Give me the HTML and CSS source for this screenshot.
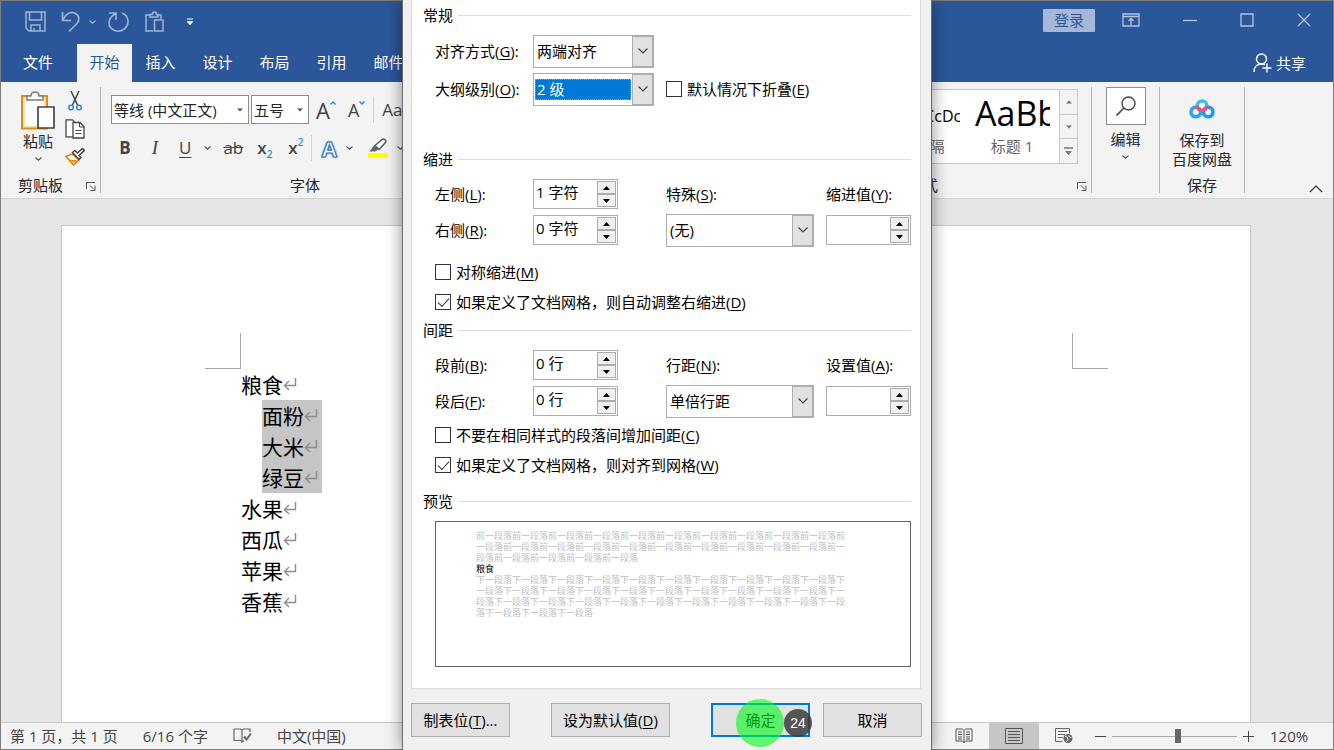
FILE: index.html
```html
<!DOCTYPE html>
<html lang="zh-CN">
<head>
<meta charset="utf-8">
<title>文档</title>
<link rel="stylesheet" href="styles.css">
</head>
<body>
<svg class="defs" aria-hidden="true">
  <symbol id="return" viewBox="0 0 14 14"><path d="M12.500 1v7.500H2M6 4 1.500 8.500 6 13" fill="none" stroke="#8c8c8c" stroke-width="1.400"/></symbol>
  <symbol id="chev" viewBox="0 0 10 6"><path d="M.5.5 5 5 9.500.5" fill="none" stroke="#444" stroke-width="1.200"/></symbol>
  <symbol id="minichev" viewBox="0 0 7 4"><path d="M.5.5 3.500 3.200 6.500.5" fill="none" stroke="currentColor" stroke-width="1.100"/></symbol>
  <symbol id="tri" viewBox="0 0 7 4"><path d="M0 0h7L3.500 4z" fill="currentColor"/></symbol>
  <symbol id="triup" viewBox="0 0 7 4"><path d="M0 4h7L3.500 0z" fill="currentColor"/></symbol>
  <symbol id="launch" viewBox="0 0 10 9"><path d="M.5 7V.5H9M4 3.500 8 7.500M9 3.500V8.500H4.500" fill="none" stroke="#555"/></symbol>
</svg>
<div class="window">
  <header class="titlebar">
    <div class="toprow">
      <div class="quick">
        <button class="ib" aria-label="保存"><svg width="22" height="22" viewBox="0 0 22 22"><g fill="none" stroke="currentColor" stroke-width="1.500"><path d="M1 1h19v19H4L1 17z"/><path d="M4.500 1v8h12V1M6 20v-6h9v6M9 20v-3"/></g></svg></button>
        <button class="ib undo" aria-label="撤消"><svg width="20" height="22" viewBox="0 0 20 22"><path d="M1.500 1v8.500H10M1.500 9.500C5 2 10 .8 13.500 2c5 2 5.500 7 2.500 10.500L8 20.500" fill="none" stroke="currentColor" stroke-width="1.700"/></svg></button>
        <button class="ib" aria-label="撤消选项"><svg width="7" height="4"><use href="#minichev"/></svg></button>
        <button class="ib redo" aria-label="重复"><svg width="22" height="22" viewBox="0 0 22 22"><path d="M1 2h7v7M8 2.500C-1 7-1 16 6.500 19.500c8 3 14-4 13.500-9.500C19.800 6 17.500 3.500 14 2" fill="none" stroke="currentColor" stroke-width="1.600"/></svg></button>
        <button class="ib paste" aria-label="粘贴"><svg width="20" height="22" viewBox="0 0 20 22"><g fill="none" stroke="currentColor" stroke-width="1.500"><path d="M8 20H1V4h4M12 4h4v4"/><path d="M5 6V3.500h2.500C7.500.3 11.500.3 11.500 3.500H13V6zM9.500 9h8.500v11H9.500z"/></g></svg></button>
        <button class="ib more" aria-label="自定义快速访问工具栏"><svg width="6" height="8" viewBox="0 0 6 8"><path d="M0 1h6" stroke="#fff"/><path d="M0 3.500h6L3 7z" fill="#fff" stroke="#fff" stroke-width=".5"/></svg></button>
      </div>
      <div class="winctl">
        <button class="login">登录</button>
        <button class="ib" aria-label="功能区显示选项"><svg width="18" height="14" viewBox="0 0 18 14"><path d="M1 1h16v12H1zM1 3.500h16M9 12V6M6.500 8 9 5.500 11.500 8" fill="none" stroke="currentColor" stroke-width="1.300"/></svg></button>
        <button class="ib" aria-label="最小化"><svg width="14" height="14"><path d="M0 7.500h14" stroke="currentColor" stroke-width="1.300"/></svg></button>
        <button class="ib" aria-label="最大化"><svg width="14" height="14"><path d="M1 1h12v12H1z" fill="none" stroke="currentColor" stroke-width="1.300"/></svg></button>
        <button class="ib" aria-label="关闭"><svg width="14" height="14"><path d="m1 1 12 12M13 1 1 13" stroke="currentColor" stroke-width="1.300"/></svg></button>
      </div>
    </div>
    <div class="tabrow">
      <nav class="tabs">
        <a class="tab file" href="#file">文件</a><a class="tab active" href="#home">开始</a><a class="tab" href="#insert">插入</a><a class="tab" href="#design">设计</a><a class="tab" href="#layout">布局</a><a class="tab" href="#refs">引用</a><a class="tab" href="#mail">邮件</a>
      </nav>
      <button class="share"><svg width="19" height="20" viewBox="0 0 19 20"><g fill="none" stroke="#fff" stroke-width="1.400"><circle cx="8.500" cy="6" r="5"/><path d="M1 19c0-5 3-8 7.500-8 1.500 0 2.500.3 3.500 1M9.500 15h9M14 10.500v9"/></g></svg>共享</button>
    </div>
  </header>

  <div class="ribbon">
    <div class="side">
      <section class="group clip">
        <div class="body clipbody">
          <button class="big"><svg width="36" height="40" viewBox="0 0 36 40"><path d="M2 5h25v33H2z" fill="#fbe3b4"/><path d="M2 5h25v32.500H2z" fill="none" stroke="#e38a1e" stroke-width="2"/><path d="M5 8h19v27H5z" fill="#fff"/><path d="M7 9V5h4c0-5.500 8-5.500 8 0h4v4z" fill="#fff" stroke="#7f7f7f" stroke-width="1.500"/><path d="M18 16h16v21H18z" fill="#fdfdfd" stroke="#444" stroke-width="1.700"/></svg><span>粘贴</span><svg class="dim" width="7" height="4"><use href="#minichev"/></svg></button>
          <div class="tools">
            <button class="ib" aria-label="剪切"><svg width="14" height="20" viewBox="0 0 14 20"><path d="m3 0 6.500 14M11 0 4.500 14" stroke="#444" stroke-width="1.500"/><g fill="none" stroke="#2b88d0" stroke-width="1.500"><circle cx="3" cy="16.500" r="2.300"/><circle cx="11" cy="16.500" r="2.300"/></g></svg></button>
            <button class="ib" aria-label="复制"><svg width="20" height="20" viewBox="0 0 20 20"><path d="M1 .8h6.500l1.500 1.500v15.500H1z" fill="#fff" stroke="#444" stroke-width="1.300"/><path d="M8 3.500h7l4 4v11.500H8z" fill="#fff" stroke="#444" stroke-width="1.300"/><path d="M14.500 3.500V8H19M10.500 11.500h6M10.500 14.500h6" fill="none" stroke="#444"/></svg></button>
            <button class="ib" aria-label="格式刷"><svg width="20" height="20" viewBox="0 0 20 20"><path d="M7.500 7 1 9.500 8.500 18l5.500-5z" fill="#fff" stroke="#e07b10" stroke-width="1.500"/><path d="m4 13 8 1-3.500 4z" fill="#f5b75c" stroke="#e07b10"/><path d="m7.500 5.500 6.500 7 2-2-2-2 5.500-5L17.500 1.500 12.500 6l-2.500-2.500z" fill="#fff" stroke="#444" stroke-width="1.500"/></svg></button>
          </div>
        </div>
        <div class="caption"><span>剪贴板</span><button class="ib launcher" aria-label="剪贴板设置"><svg width="10" height="9"><use href="#launch"/></svg></button></div>
      </section>
      <section class="group font">
        <div class="body fontbody">
          <div class="frow">
            <label class="fcombo name"><select aria-label="字体"><option>等线 (中文正文)</option></select><svg width="6" height="4" viewBox="0 0 7 4"><use href="#tri"/></svg></label>
            <label class="fcombo size"><select aria-label="字号"><option>五号</option></select><svg width="6" height="4" viewBox="0 0 7 4"><use href="#tri"/></svg></label>
            <button class="ib letter grow" aria-label="增大字号">A<svg width="6" height="4" viewBox="0 0 6 4"><path d="M.5 3.500 3 1l2.500 2.500" fill="none" stroke="#2b88d0" stroke-width="1.400"/></svg></button>
            <button class="ib letter shrink" aria-label="减小字号">A<svg width="6" height="4" viewBox="0 0 6 4"><path d="M.5.5 3 3 5.500.5" fill="none" stroke="#2b88d0" stroke-width="1.400"/></svg></button>
            <i class="vline"></i>
            <button class="ib letter case">Aa</button>
          </div>
          <div class="frow second">
            <button class="ib fmt bold">B</button>
            <button class="ib fmt ital">I</button>
            <button class="ib fmt under">U</button>
            <button class="ib dim" aria-label="下划线选项"><svg width="7" height="4"><use href="#minichev"/></svg></button>
            <button class="ib fmt strike">ab</button>
            <button class="ib fmt subs">x<sub>2</sub></button>
            <button class="ib fmt sups">x<sup>2</sup></button>
            <i class="vline tight"></i>
            <button class="ib fx" aria-label="文本效果">A</button>
            <button class="ib dim" aria-label="文本效果选项"><svg width="7" height="4"><use href="#minichev"/></svg></button>
            <button class="ib hl" aria-label="突出显示"><svg width="20" height="20" viewBox="0 0 20 20"><path d="M0 15h20v5H0z" fill="#ff0"/><path d="M1.500 13.500 6 7.500l4.500 4-3.500 2z" fill="#666"/><path d="m7 7.500 7-6c2-1.500 5 1 3.500 3L11 11.500z" fill="#fff" stroke="#555" stroke-width="1.400"/></svg></button>
            <button class="ib dim" aria-label="突出显示选项"><svg width="7" height="4"><use href="#minichev"/></svg></button>
          </div>
        </div>
        <div class="caption"><span>字体</span></div>
      </section>
    </div>
    <div class="side">
      <section class="group styles">
        <div class="body stylesbody">
          <div class="gallery">
            <button class="style prev"><span class="sample small">AaBbCcDc</span><span>无间隔</span></button>
            <button class="style"><span class="sample">AaBb</span><span>标题 1</span></button>
          </div>
          <div class="scroll">
            <button class="ib" aria-label="上一行"><svg width="6" height="4" viewBox="0 0 7 4"><use href="#triup"/></svg></button>
            <button class="ib" aria-label="下一行"><svg width="6" height="4" viewBox="0 0 7 4"><use href="#tri"/></svg></button>
            <button class="ib" aria-label="其他"><svg width="9" height="9" viewBox="0 0 9 9"><path d="M0 1h9" stroke="#777" stroke-width="1.500"/><path d="M1 4h7L4.500 8z" fill="#777"/></svg></button>
          </div>
        </div>
        <div class="caption"><span>样式</span><button class="ib launcher" aria-label="样式设置"><svg width="10" height="9"><use href="#launch"/></svg></button></div>
      </section>
      <section class="group edit">
        <button class="big"><span class="lens"><svg width="20" height="20" viewBox="0 0 20 20"><circle cx="12.500" cy="7.500" r="6.500" fill="none" stroke="#444" stroke-width="1.400"/><path d="m8 12-7.500 7.500" stroke="#444" stroke-width="1.600"/></svg></span><span>编辑</span><svg class="dim" width="7" height="4"><use href="#minichev"/></svg></button>
      </section>
      <section class="group save">
        <div class="body">
          <button class="big"><svg width="26" height="21" viewBox="0 0 26 21"><g fill="none" stroke-width="3.600"><circle cx="6.800" cy="14" r="4.800" stroke="#2aa5f5"/><circle cx="19.200" cy="14" r="4.800" stroke="#1f97f4"/><path d="M8 8a5 5 0 1 1 10 0" stroke="#39bff5"/><path d="M8 7.500a5 5 0 0 0 10 0" stroke="#f2506b"/></g></svg><span>保存到<br>百度网盘</span></button>
        </div>
        <div class="caption"><span>保存</span></div>
      </section>
      <div class="tail"><button class="ib" aria-label="折叠功能区"><svg width="14" height="8" viewBox="0 0 14 8"><path d="m1 7 6-6 6 6" fill="none" stroke="#444" stroke-width="1.400"/></svg></button></div>
    </div>
  </div>

  <main class="canvas">
    <article class="page">
      <div class="marks"><i class="mark l"></i><i class="mark r"></i></div>
      <div class="text">
        <p>粮食<svg width="14" height="14"><use href="#return"/></svg></p>
        <div class="picked">
          <p>面粉<svg width="14" height="14"><use href="#return"/></svg></p>
          <p>大米<svg width="14" height="14"><use href="#return"/></svg></p>
          <p>绿豆<svg width="14" height="14"><use href="#return"/></svg></p>
        </div>
        <p>水果<svg width="14" height="14"><use href="#return"/></svg></p>
        <p>西瓜<svg width="14" height="14"><use href="#return"/></svg></p>
        <p>苹果<svg width="14" height="14"><use href="#return"/></svg></p>
        <p>香蕉<svg width="14" height="14"><use href="#return"/></svg></p>
      </div>
    </article>
  </main>

  <footer class="status">
    <div class="stat">
      <span>第 1 页，共 1 页</span>
      <span>6/16 个字</span>
      <svg width="19" height="16" viewBox="0 0 19 16"><g fill="none" stroke="#666" stroke-width="1.200"><path d="M9 13.500 7.500 12.500H1V1h6.500L9 2l1.500-1H17v3M9 2v12l2-1.500"/><path d="m11 8.500 2.500 3L18 5.500" stroke-width="2"/></g></svg>
      <span>中文(中国)</span>
    </div>
    <div class="views">
      <button class="view" aria-label="阅读视图"><svg width="18" height="16" viewBox="0 0 18 16"><path d="M9 15V2.500L7.500 1H1v12h6.500L9 14.500l1.500-1.500H17V1h-6.500L9 2.500M3 4h4M3 6.500h4M3 9h4M3 11h4M11 4h4M11 6.500h4M11 9h4M11 11h4" fill="none" stroke="#555"/></svg></button>
      <button class="view on" aria-label="页面视图"><svg width="18" height="16" viewBox="0 0 18 16"><path d="M.5.5h17v15H.5zM3 3.500h12M3 6.500h12M3 9.500h12M3 12.500h12" fill="none" stroke="#555"/></svg></button>
      <button class="view" aria-label="Web 版式视图"><svg width="18" height="16" viewBox="0 0 18 16"><path d="M7.500 13.500h-7V.5h14v5M3 3.500h9M3 6.500h7M3 9.500h5" fill="none" stroke="#666"/><circle cx="13" cy="10.500" r="4.500" fill="#666"/><path d="m10 8 2.500 1.500.5 2-1.500 2M13.500 7.500l1 1.500 2 .5" fill="none" stroke="#f3f3f3"/></svg></button>
      <button class="ib zoom" aria-label="缩小"><svg width="11" height="11"><path d="M0 5.500h11" stroke="#444"/></svg></button>
      <input class="slider" type="range" min="0" max="100" value="53" aria-label="缩放">
      <button class="ib zoom" aria-label="放大"><svg width="11" height="11"><path d="M0 5.500h11M5.500 0v11" stroke="#444"/></svg></button>
      <span class="pct">120%</span>
    </div>
  </footer>
</div>

<div class="overlay">
<form class="dialog" role="dialog" aria-label="段落">
  <div class="panel">
    <section>
      <h2>常规</h2>
      <div class="general">
        <label for="align">对齐方式(<u>G</u>):</label>
        <div class="combo"><select id="align"><option>两端对齐</option></select><span class="arrow"><svg width="10" height="6"><use href="#chev"/></svg></span></div>
        <span></span>
        <label for="level">大纲级别(<u>O</u>):</label>
        <div class="combo focus"><select id="level"><option>2 级</option></select><span class="arrow"><svg width="10" height="6"><use href="#chev"/></svg></span></div>
        <label class="check"><input type="checkbox">默认情况下折叠(<u>E</u>)</label>
      </div>
    </section>
    <section class="indent">
      <h2>缩进</h2>
      <div class="fields">
        <label for="left">左侧(<u>L</u>):</label>
        <div class="spin"><input id="left" type="text" value="1 字符"><span class="steps"><button type="button" aria-label="增加"><svg width="7" height="4"><use href="#triup"/></svg></button><button type="button" aria-label="减少"><svg width="7" height="4"><use href="#tri"/></svg></button></span></div>
        <label class="c3" for="special">特殊(<u>S</u>):</label>
        <label class="c4" for="by">缩进值(<u>Y</u>):</label>
        <label for="right">右侧(<u>R</u>):</label>
        <div class="spin"><input id="right" type="text" value="0 字符"><span class="steps"><button type="button" aria-label="增加"><svg width="7" height="4"><use href="#triup"/></svg></button><button type="button" aria-label="减少"><svg width="7" height="4"><use href="#tri"/></svg></button></span></div>
        <div class="combo c3"><select id="special"><option>(无)</option></select><span class="arrow"><svg width="10" height="6"><use href="#chev"/></svg></span></div>
        <div class="spin c4"><input id="by" type="text" value=""><span class="steps"><button type="button" aria-label="增加"><svg width="7" height="4"><use href="#triup"/></svg></button><button type="button" aria-label="减少"><svg width="7" height="4"><use href="#tri"/></svg></button></span></div>
      </div>
      <div class="checks wide">
        <label class="check"><input type="checkbox">对称缩进(<u>M</u>)</label>
        <label class="check"><input type="checkbox" checked>如果定义了文档网格，则自动调整右缩进(<u>D</u>)</label>
      </div>
    </section>
    <section>
      <h2>间距</h2>
      <div class="fields">
        <label for="before">段前(<u>B</u>):</label>
        <div class="spin"><input id="before" type="text" value="0 行"><span class="steps"><button type="button" aria-label="增加"><svg width="7" height="4"><use href="#triup"/></svg></button><button type="button" aria-label="减少"><svg width="7" height="4"><use href="#tri"/></svg></button></span></div>
        <label class="c3" for="line">行距(<u>N</u>):</label>
        <label class="c4" for="at">设置值(<u>A</u>):</label>
        <label for="after">段后(<u>F</u>):</label>
        <div class="spin"><input id="after" type="text" value="0 行"><span class="steps"><button type="button" aria-label="增加"><svg width="7" height="4"><use href="#triup"/></svg></button><button type="button" aria-label="减少"><svg width="7" height="4"><use href="#tri"/></svg></button></span></div>
        <div class="combo c3"><select id="line"><option>单倍行距</option></select><span class="arrow"><svg width="10" height="6"><use href="#chev"/></svg></span></div>
        <div class="spin c4"><input id="at" type="text" value=""><span class="steps"><button type="button" aria-label="增加"><svg width="7" height="4"><use href="#triup"/></svg></button><button type="button" aria-label="减少"><svg width="7" height="4"><use href="#tri"/></svg></button></span></div>
      </div>
      <div class="checks">
        <label class="check"><input type="checkbox">不要在相同样式的段落间增加间距(<u>C</u>)</label>
        <label class="check"><input type="checkbox" checked>如果定义了文档网格，则对齐到网格(<u>W</u>)</label>
      </div>
    </section>
    <section class="last">
      <h2>预览</h2>
      <div class="preview">
        <p>前一段落前一段落前一段落前一段落前一段落前一段落前一段落前一段落前一段落前一段落前一段落前一段落前一段落前一段落前一段落前一段落前一段落前一段落前一段落前一段落前一段落前一段落前一段落前一段落前一段落</p>
        <p class="now">粮食</p>
        <p>下一段落下一段落下一段落下一段落下一段落下一段落下一段落下一段落下一段落下一段落下一段落下一段落下一段落下一段落下一段落下一段落下一段落下一段落下一段落下一段落下一段落下一段落下一段落下一段落下一段落下一段落下一段落下一段落下一段落下一段落下一段落下一段落下一段落下一段落</p>
      </div>
    </section>
  </div>
  <div class="actions">
    <button type="button" class="btn">制表位(<u>T</u>)...</button>
    <button type="button" class="btn def">设为默认值(<u>D</u>)</button>
    <div class="okwrap"><button type="button" class="btn ok">确定</button><span class="halo"></span><span class="count">24</span></div>
    <button type="button" class="btn">取消</button>
  </div>
</form>
</div>
</body>
</html>
```
FILE: styles.css
```css
* { box-sizing: border-box; }
html, body { height: 100%; }
body {
  margin: 0;
  font: 15px/20px "Open Sans", "Noto Sans CJK SC", sans-serif;
  color: #262626;
  overflow: hidden;
}
.defs { position: absolute; width: 0; height: 0; }
svg { display: block; flex: none; }
button, input, select { font: inherit; color: inherit; margin: 0; }
button { border: 0; background: none; padding: 0; }
select { appearance: none; border: 0; background: none; outline: 0; min-width: 0; }
p, h2 { margin: 0; font-weight: 400; }
a { text-decoration: none; color: inherit; }
.ib { display: inline-flex; align-items: center; justify-content: center; flex: none; }

.window {
  display: flex;
  flex-direction: column;
  height: 100%;
  border: 1px solid #7e7e7e;
}

/* Title bar */
.titlebar { background: #2b579a; color: #fff; flex: none; }
.toprow { display: flex; justify-content: space-between; height: 43px; align-items: flex-start; }
.quick { display: flex; align-items: center; height: 41px; padding-left: 24px; color: #a0b4d4; }
.undo { margin: 0 8px 0 14px; }
.redo { margin-left: 12px; }
.paste { margin-left: 15px; }
.more { margin-left: 22px; }
.winctl { display: flex; align-items: center; gap: 43px; height: 38px; padding-right: 22px; color: #b5c4de; }
.login { width: 52px; height: 23px; background: #a6b8d5; color: #2b579a; margin-right: -16px; border-radius: 1px; }
.tabrow { display: flex; justify-content: space-between; height: 38px; align-items: stretch; }
.tabs { display: flex; }
.tab { width: 57px; display: flex; align-items: center; justify-content: center; padding-bottom: 2px; }
.tab.file { width: 76px; padding-right: 2px; }
.tab.active { width: 55px; background: #f3f3f3; color: #2b579a; }
.share { display: flex; align-items: center; gap: 4px; padding-right: 27px; color: #fff; }

/* Ribbon */
.ribbon {
  display: flex;
  justify-content: space-between;
  height: 117px;
  flex: none;
  background: #f3f3f3;
  border-bottom: 1px solid #d2d2d2;
  padding: 5px 0;
}
.side { display: flex; }
.group { display: flex; flex-direction: column; border-right: 1px solid #b4b4b4; }
.font { border-right: 0; }
.body { height: 91px; display: flex; }
.caption { height: 16px; display: flex; align-items: center; justify-content: center; }
.big { display: flex; flex-direction: column; align-items: center; justify-content: flex-start; }
.dim { color: #555; }
.clip { width: 100px; }
.clipbody { padding: 4px 0 0 19px; gap: 8px; align-items: flex-start; }
.clipbody .big { width: 36px; }
.clipbody .big .dim { margin-top: 6px; }
.tools { display: flex; flex-direction: column; align-items: center; gap: 8px; width: 22px; }
.clip .caption { justify-content: space-between; padding: 0 4px 0 17px; }
.launcher { padding-top: 3px; }

.font { width: 408px; }
.fontbody { flex-direction: column; padding: 8px 0 0 10px; gap: 11px; }
.frow { display: flex; align-items: center; height: 29px; }
.fcombo { display: flex; align-items: center; height: 29px; border: 1px solid #8d8d8d; background: #fff; padding: 0 5px 0 2px; color: #555; }
.fcombo select { flex: 1; padding: 0; color: #262626; }
.name { width: 138px; margin-right: 2px; }
.size { width: 58px; }
.letter { color: #444; align-items: flex-start; }
.grow { font-size: 22px; margin-left: 7px; }
.shrink { font-size: 18px; margin-left: 12px; }
.letter svg { margin-top: 1px; }
.case { font-size: 17px; }
.vline { width: 1px; height: 26px; background: #cfcfcf; margin: 0 8px; }
.vline.tight { margin-right: 7px; }
.second { height: 26px; color: #444; }
.fmt { font-size: 17px; min-width: 12px; height: 22px; margin-right: 18px; }
.bold { font-weight: 700; margin-left: 8px; }
.ital { font-family: "Liberation Serif", serif; font-style: italic; font-size: 19px; }
.under { text-decoration: underline; text-underline-offset: 3px; margin-right: 13px; }
.strike { text-decoration: line-through; margin: 0 14px 0 12px; }
.subs, .sups { font-weight: 600; margin-right: 16px; }
.fmt sub, .fmt sup { font-size: 10px; line-height: 10px; font-weight: 600; color: #2b88d0; }
.fmt sub { align-self: flex-end; }
.fmt sup { align-self: flex-start; }
.fmt.sups { margin-right: 0; }
.fx { width: 20px; font-size: 22px; font-weight: 700; color: #fff; -webkit-text-stroke: 1px #1e6fba; text-shadow: 0 0 2px #2b88d0, 0 0 2px #2b88d0; margin-right: 7px; }
.hl { margin: 0 9px 0 15px; }
.font .caption { justify-content: flex-start; padding-left: 189px; }

.styles { width: 340px; }
.stylesbody { justify-content: flex-end; padding: 2px 13px 0 0; }
.gallery { display: flex; justify-content: flex-end; height: 75px; background: #fff; border: 1px solid #c8c8c8; border-right: 0; flex: 1; color: #666; overflow: hidden; }
.style { display: flex; flex-direction: column; align-items: center; width: 76px; margin-right: 9px; }
.sample { height: 46px; width: 76px; font: 500 34px/46px "Open Sans", sans-serif; color: #000; overflow: hidden; white-space: nowrap; text-align: left; padding-left: 1px; }
.sample.small { font-size: 16px; font-weight: 400; line-height: 52px; }
.prev { margin-right: 14px; }
.scroll { display: flex; flex-direction: column; width: 19px; height: 75px; border: 1px solid #c8c8c8; color: #777; }
.scroll .ib { flex: 1; }
.scroll .ib + .ib { border-top: 1px solid #c8c8c8; }
.styles .caption { justify-content: space-between; padding: 0 4px 0 156px; }
.edit { width: 68px; align-items: center; }
.lens { width: 40px; height: 38px; border: 1px solid #8d8d8d; background: #fff; display: flex; align-items: center; justify-content: center; margin-bottom: 4px; }
.edit .dim { margin-top: 6px; }
.save { width: 85px; }
.save .body { justify-content: center; align-items: flex-start; padding-top: 11px; }
.save .big { line-height: 19px; gap: 12px; }
.tail { width: 88px; display: flex; align-items: flex-end; justify-content: flex-end; padding-right: 10px; }

/* Document */
.canvas { flex: 1; min-height: 0; background: #e6e6e6; padding: 26px 82px 0 60px; display: flex; }
.page { flex: 1; background: #fff; border: 1px solid #c6c6c6; border-bottom: 0; padding: 107px 142px 0 143px; color: #000; }
.marks { display: flex; justify-content: space-between; }
.mark { width: 36px; height: 36px; border: 0 solid #a6a6a6; border-bottom-width: 1px; }
.mark.l { border-right-width: 1px; }
.mark.r { border-left-width: 1px; }
.text { padding-left: 36px; display: flex; flex-direction: column; align-items: flex-start; font: 300 21px/31px "Noto Sans CJK SC", sans-serif; }
.text p { display: flex; align-items: center; }
.text svg { margin-bottom: 2px; }
.picked { background: #c6c6c6; margin-left: 21px; padding-right: 4px; }

/* Status bar */
.status { display: flex; justify-content: space-between; height: 27px; flex: none; background: #f3f3f3; border-top: 1px solid #c6c6c6; color: #444; }
.stat { display: flex; align-items: center; gap: 25px; padding-left: 9px; }
.views { display: flex; align-items: center; padding-right: 22px; }
.view { width: 50px; height: 26px; display: flex; align-items: center; justify-content: center; }
.view.on { background: #c6c6c6; }
.zoom { width: 13px; }
.view + .zoom { margin-left: 5px; }
.slider { appearance: none; width: 125px; height: 14px; margin: 0 5px; background: linear-gradient(#aaa, #aaa) center / 100% 1px no-repeat; }
.slider::-webkit-slider-thumb { appearance: none; width: 6px; height: 14px; background: #666; }
.pct { margin-left: 15px; width: 41px; }

/* Dialog */
.overlay { position: absolute; inset: 0; display: flex; justify-content: center; align-items: stretch; overflow: hidden; }
.dialog {
  width: 530px;
  background: #f0f0f0;
  border: 0 solid #6b6b6b;
  border-width: 0 1px;
  box-shadow: 0 0 16px rgba(0, 0, 0, .45);
  padding: 0 9px 0 8px;
  color: #000;
}
.panel { background: #fff; border: 1px solid #dadada; border-top: 0; padding: 3px 9px 21px 11px; margin-right: 1px; }
h2 { display: flex; align-items: center; gap: 5px; height: 24px; font-size: 15px; margin-bottom: 5px; }
h2::after { content: ""; flex: 1; height: 1px; background: #dcdcdc; }
u { text-underline-offset: 2px; }
.general, .fields { display: grid; align-items: center; padding-left: 12px; }
.general { grid-template-columns: 98px 121px 1fr; grid-auto-rows: 38px; }
.fields { grid-template-columns: 98px 85px 48px 1fr 12px 85px; grid-auto-rows: 36px; }
.c3 { grid-column: 4; }
.c4 { grid-column: 6; }
.indent { margin-top: 39px; }
.combo { display: flex; align-items: center; height: 33px; border: 1px solid #adadad; background: #fff; padding-left: 1px; }
.combo select { flex: 1; height: 21px; padding: 0 2px; }
.focus select { background: #0078d7; color: #fff; outline: 1px dotted #ff8728; outline-offset: -1px; margin-right: 1px; }
.arrow { width: 21px; height: 31px; background: #e1e1e1; border: 1px solid #adadad; display: flex; align-items: center; justify-content: center; pointer-events: none; }
.spin { display: flex; height: 30px; border: 1px solid #abadb3; background: #fff; padding: 1px; }
.spin input { flex: 1; min-width: 0; width: 0; border: 0; outline: 0; padding: 0 1px 4px; background: none; }
.steps { display: flex; flex-direction: column; width: 19px; }
.steps button { flex: 1; display: flex; align-items: center; justify-content: center; background: #f0f0f0; border: 1px solid #acacac; }
.checks { display: flex; flex-direction: column; padding: 1px 0 9px 12px; }
.checks.wide { padding: 9px 0 1px 12px; }
.check { display: flex; align-items: center; height: 30px; }
.general .check { padding-left: 12px; }
.check input { appearance: none; width: 16px; height: 16px; border: 1px solid #333; background: #fff; margin-right: 5px; display: grid; place-items: center; flex: none; }
.check input:checked::before { content: ""; width: 10px; height: 5px; border: solid #333; border-width: 0 0 1px 1px; transform: translateY(-1px) rotate(-48deg); }
.last h2 { margin-bottom: 8px; }
.preview { margin-left: 12px; height: 146px; border: 1px solid #646464; padding: 8px 64px 0 40px; font-size: 9px; line-height: 11px; color: #c0c0c0; word-break: break-all; }
.preview .now { color: #000; }
.actions { display: flex; margin-top: 14px; }
.btn { width: 99px; height: 34px; background: #e1e1e1; border: 1px solid #adadad; }
.def { width: 119px; margin: 0 41px 0 41px; }
.okwrap { position: relative; margin-right: 13px; }
.ok { border: 2px solid #0078d7; }
.halo { position: absolute; left: 25px; top: -4px; width: 48px; height: 48px; border-radius: 50%; background: rgba(0, 250, 30, .6); }
.count { position: absolute; left: 73px; top: 6px; width: 28px; height: 28px; border-radius: 50%; background: rgba(60, 60, 60, .85); color: #fff; font: 14px/28px "Liberation Sans", sans-serif; text-align: center; }
```
